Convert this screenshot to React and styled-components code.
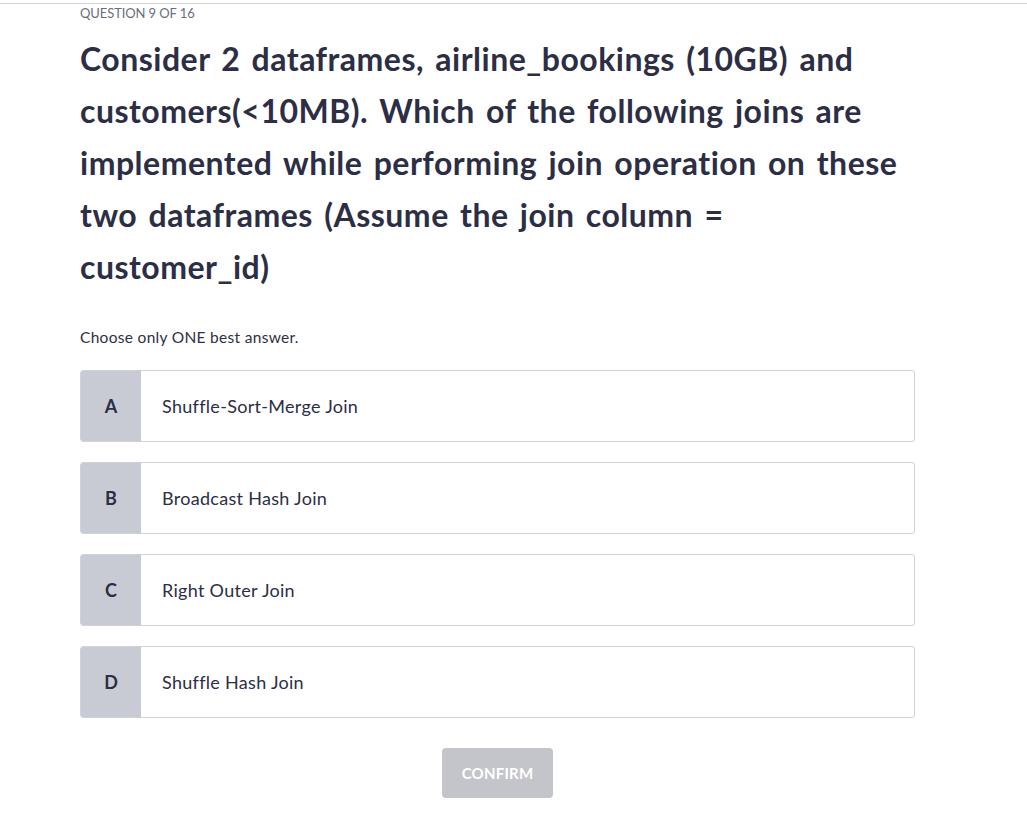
import React from 'react';
import styled, { createGlobalStyle } from 'styled-components';

const GlobalStyle = createGlobalStyle`
  body {
    margin: 0;
    background: #ffffff;
    font-family: Lato, "Noto Sans", sans-serif;
  }
`;

const TopRule = styled.div`
  border-top: 1px solid #d4d4d8;
  margin-top: 3px;
`;

const Page = styled.div`
  width: 835px;
  padding: 0 0 0 80px;
`;

const Counter = styled.div`
  font-size: 13px;
  color: #6b6f7d;
  letter-spacing: -0.1px;
  line-height: 18px;
`;

const Question = styled.h1`
  margin: 11px 0 0;
  font-size: 32px;
  font-weight: 700;
  line-height: 52px;
  color: #2c2e45;
  letter-spacing: 0.5px;
  word-spacing: 3px;
`;

const Hint = styled.p`
  margin: 35px 0 0;
  font-size: 15.5px;
  color: #2f3142;
  letter-spacing: 0.3px;
`;

const Options = styled.div`
  display: flex;
  flex-direction: column;
  gap: 20px;
  margin-top: 24px;
`;

const Option = styled.div`
  display: flex;
  height: 72px;
  border: 1px solid #d2d0d9;
  border-radius: 3px;
  overflow: hidden;
  box-sizing: border-box;
  background: #fff;
  cursor: pointer;
`;

const Letter = styled.div`
  flex: 0 0 60px;
  display: flex;
  align-items: center;
  justify-content: center;
  background: #c9cbd4;
  font-size: 18px;
  font-weight: 700;
  color: #2c2e45;
`;

const Label = styled.div`
  display: flex;
  align-items: center;
  padding-left: 21px;
  font-size: 18px;
  color: #2c2e45;
  letter-spacing: 0.3px;
`;

const Footer = styled.div`
  display: flex;
  justify-content: center;
  margin-top: 30px;
`;

const ConfirmButton = styled.button`
  width: 111px;
  height: 50px;
  border: none;
  border-radius: 4px;
  background: #c4c5ca;
  color: #ffffff;
  font-family: Lato, "Noto Sans", sans-serif;
  font-size: 15px;
  font-weight: 700;
  letter-spacing: 0.2px;
`;

const answers = [
  ['A', 'Shuffle-Sort-Merge Join'],
  ['B', 'Broadcast Hash Join'],
  ['C', 'Right Outer Join'],
  ['D', 'Shuffle Hash Join'],
];

const App = () => {
  return (
    <>
      <GlobalStyle />
      <TopRule />
      <Page>
        <Counter>QUESTION 9 OF 16</Counter>
        <Question>
          Consider 2 dataframes, airline_bookings (10GB) and customers(&lt;10MB).
          Which of the following joins are implemented while performing join
          operation on these two dataframes (Assume the join column =
          customer_id)
        </Question>
        <Hint>Choose only ONE best answer.</Hint>
        <Options>
          {answers.map(([key, text]) => (
            <Option key={key}>
              <Letter>{key}</Letter>
              <Label>{text}</Label>
            </Option>
          ))}
        </Options>
        <Footer>
          <ConfirmButton disabled>CONFIRM</ConfirmButton>
        </Footer>
      </Page>
    </>
  );
};

export default App;
